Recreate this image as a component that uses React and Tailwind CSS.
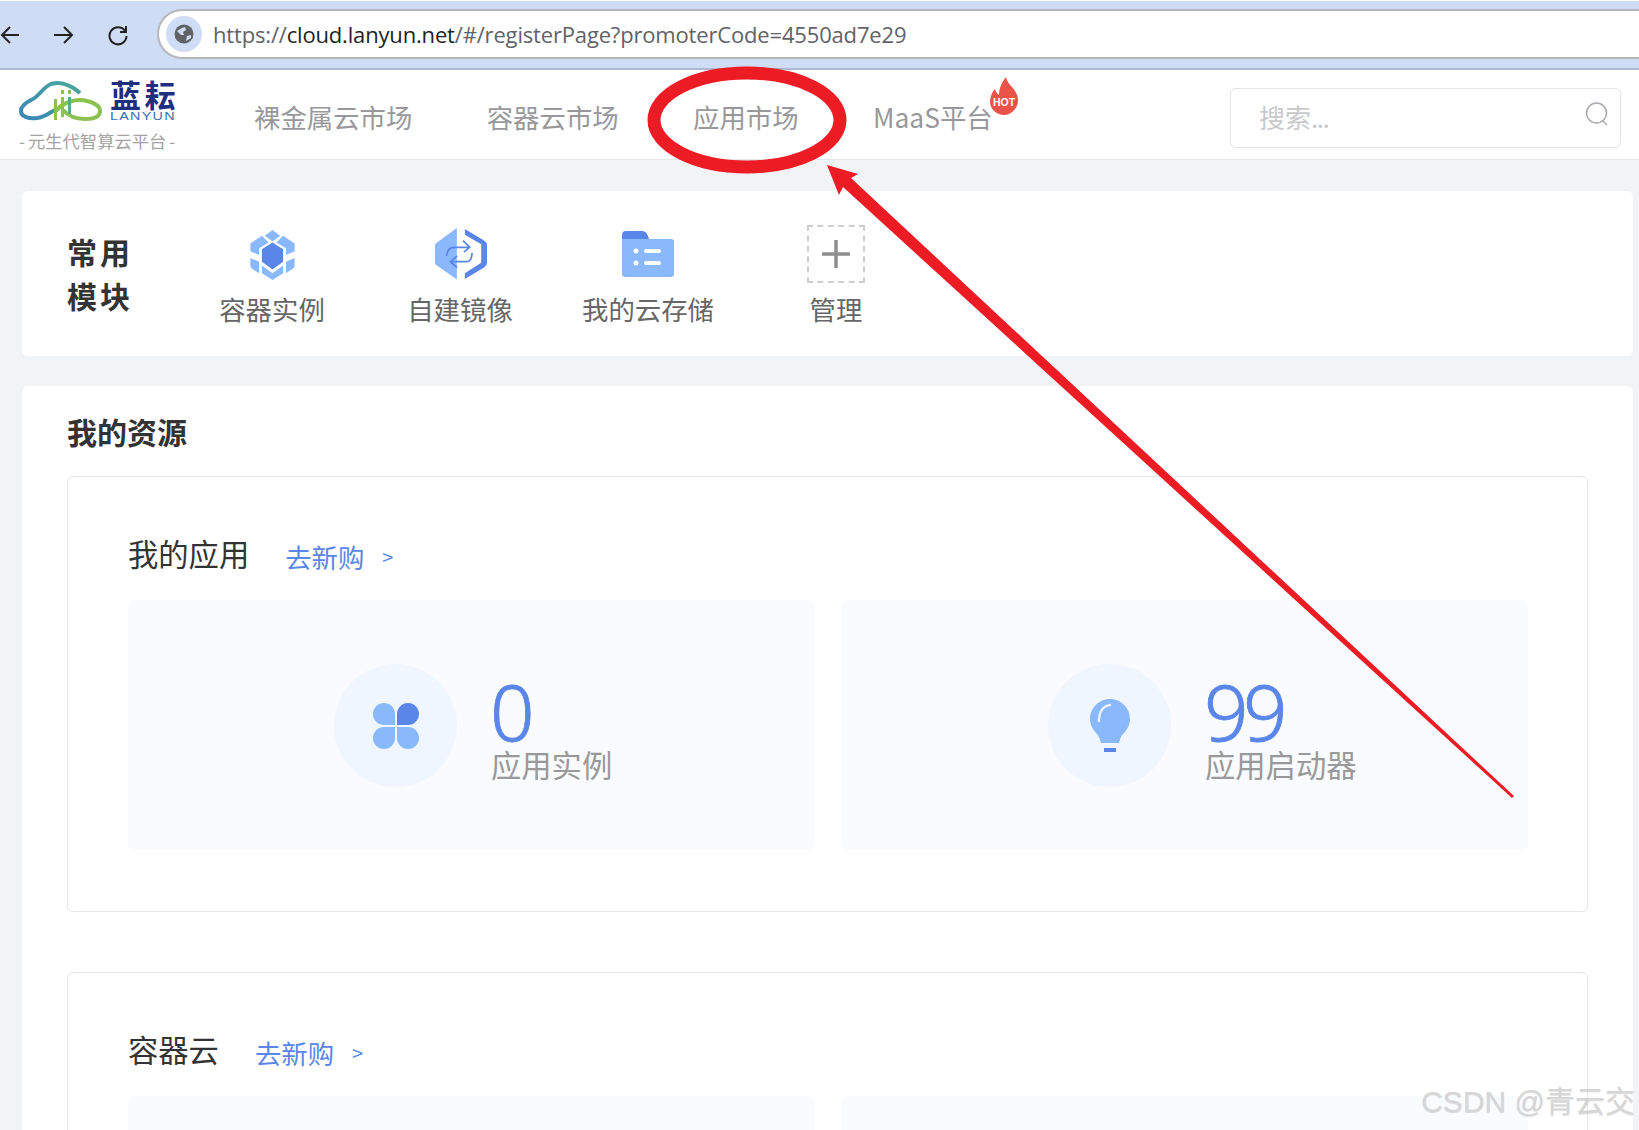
import React from "react";

const CJK = { fontFamily: '"Noto Sans CJK SC", "Noto Sans", sans-serif' };

function ContainerIcon() {
  return (
    <svg width="45" height="50" viewBox="0 0 46 52" className="mt-[2px] ml-[1px]">
      <path d="M23 13 L34 20 V33 L23 41 L12 33 V20 Z" fill="#5a86ea" />
      <path d="M15 6 L23 0 L31 6 L23 12 Z" fill="#8ab8fd" />
      <path d="M0 14 L12 6 L19 13 L9 19 V26 L0 22 Z" fill="#8ab8fd" />
      <path d="M46 14 L34 6 L27 13 L37 19 V26 L46 22 Z" fill="#8ab8fd" />
      <path d="M0 29 L9 33 V45 L1.500 40 Q0 39 0 37 Z" fill="#8ab8fd" />
      <path d="M46 29 L37 33 V45 L44.500 40 Q46 39 46 37 Z" fill="#8ab8fd" />
      <path d="M12 37 L23 45 L34 37 V45 L23 52 L12 45 Z" fill="#8ab8fd" />
    </svg>
  );
}

function ImageIcon() {
  return (
    <svg width="52" height="52" viewBox="0 0 54 54" className="ml-[1px]">
      <path d="M22.700 0 V53.500 L2 39 Q0 38 0 36 V18 Q0 16 2 15 Z" fill="#8ab8fd" />
      <path d="M31 1 L51 13 Q54 15 54 18 V36 Q54 39 51 41 L31 53 V47 L48 36 V17 L31 7 Z" fill="#5a86ea" />
      <path d="M12 29 Q13 20 20 20 H35 M29 13 L36 20 L30 25" fill="none" stroke="#5a86ea" strokeWidth="1.800" />
      <path d="M38.500 26 Q38 35 33 35 H16 M23 29 L16 35 L23 41" fill="none" stroke="#5a86ea" strokeWidth="1.800" />
    </svg>
  );
}

function FolderIcon() {
  return (
    <svg width="52" height="46" viewBox="0 0 52 46">
      <path d="M0 10 V4 Q0 0 4 0 H20 Q24 0 26 5 L27 8 H3 Z" fill="#5a86ea" />
      <path d="M0 8 H49 Q52 8 52 11 V43 Q52 46 49 46 H3 Q0 46 0 43 Z" fill="#8ab8fd" />
      <circle cx="14" cy="20" r="2.500" fill="#fff" />
      <circle cx="14" cy="32" r="2.500" fill="#fff" />
      <rect x="22" y="18" width="17" height="4" rx="2" fill="#fff" />
      <rect x="22" y="30" width="17" height="4" rx="2" fill="#fff" />
    </svg>
  );
}

function PetalIcon() {
  return (
    <svg width="46" height="46" viewBox="0 0 46 46">
      <path d="M11 0 A11 11 0 0 0 0 11 A11 11 0 0 0 11 22 H22 V11 A11 11 0 0 0 11 0 Z" fill="#8ab8fd" />
      <path d="M35 0 A11 11 0 0 1 46 11 A11 11 0 0 1 35 22 H24 V11 A11 11 0 0 1 35 0 Z" fill="#5a86ea" />
      <path d="M11 46 A11 11 0 0 1 0 35 A11 11 0 0 1 11 24 H22 V35 A11 11 0 0 1 11 46 Z" fill="#8ab8fd" />
      <path d="M35 46 A11 11 0 0 0 46 35 A11 11 0 0 0 35 24 H24 V35 A11 11 0 0 0 35 46 Z" fill="#8ab8fd" />
    </svg>
  );
}

function BulbIcon() {
  return (
    <svg width="42" height="54" viewBox="0 0 42 54">
      <path d="M21 0 C32 0 41 9 41 20 C41 26 38 31 34 35 C32 37 31 40 30 44 H12 C11 40 10 37 8 35 C4 31 1 26 1 20 C1 9 10 0 21 0 Z" fill="#8ab8fd" />
      <path d="M10 22 C10 13 14 7 21 6" fill="none" stroke="#eaf3ff" strokeWidth="2.500" strokeLinecap="round" />
      <rect x="15" y="49" width="12" height="4" fill="#5a86ea" />
    </svg>
  );
}

function Logo() {
  return (
    <div className="w-[160px] h-[78px] ml-[19px] mt-[8px] shrink-0 flex flex-col">
      <div className="flex items-start h-[50px]">
        <svg width="84" height="44" viewBox="0 0 84 44" className="mt-[2px]">
          <defs>
            <linearGradient id="cloud" x1="0" y1="1" x2="1" y2="0">
              <stop offset="0" stopColor="#3a86b8" />
              <stop offset="1" stopColor="#4aa79a" />
            </linearGradient>
          </defs>
          <path d="M61 13 C52 5 42 1 32 4 C24 7 20 17 12 20 C6 23 2 26 2 31 C2 37 10 39 18 38 C26 37 30 33 36 30" fill="none" stroke="url(#cloud)" strokeWidth="4" />
          <path d="M37 31 C44 22 58 18 68 21 C76 23 81 26 81 31 C81 37 74 39 66 39 C58 39 50 37 44 30" fill="none" stroke="#8cc152" strokeWidth="4" />
          <rect x="35" y="19" width="3" height="21" fill="#8cc152" />
          <rect x="42" y="17" width="3" height="20" fill="#8cc152" />
          <rect x="49" y="17" width="3" height="17" fill="#5aa98c" />
          <rect x="42" y="10" width="3" height="4" fill="#8cc152" />
          <rect x="49" y="10" width="3" height="4" fill="#8cc152" />
        </svg>
        <div className="ml-[7px] flex flex-col items-start mt-[-1px]">
          <div className="text-[31px] leading-[33px] font-bold text-[#1e2f80] tracking-[3.500px] whitespace-nowrap">蓝耘</div>
          <div className="mt-[1px] text-[11.500px] leading-[11px] text-[#3a6fb5] tracking-[1px] whitespace-nowrap origin-left scale-x-[1.25]" style={{ fontFamily: '"Liberation Sans", sans-serif' }}>LANYUN</div>
        </div>
      </div>
      <div className="flex items-center gap-[3px] text-[17.300px] leading-[22px] text-[#a3a3a3] mt-[2px] whitespace-nowrap">
        <span>-</span>
        <span>元生代智算云平台</span>
        <span>-</span>
      </div>
    </div>
  );
}

function Flame() {
  return (
    <svg width="30" height="38" viewBox="0 0 30 38" className="absolute left-[116px] top-[-24px]">
      <path d="M17 0 C18 6 23 9 26 14 C30 20 30 27 26 32 C23 36 19 38 15 38 C8 38 1 32 1 25 C1 20 3 15 6 12 C7 15 8 17 10 18 C10 11 13 5 17 0 Z" fill="#ec5348" />
      <text x="15" y="29" textAnchor="middle" fontSize="10.500" fontWeight="700" fill="#fff" style={{ fontFamily: '"Liberation Sans", sans-serif' }}>HOT</text>
    </svg>
  );
}

function Module({ icon, label }) {
  return (
    <div className="w-[188px] flex flex-col items-center">
      <div className="h-[56px] flex items-center justify-center">{icon}</div>
      <div className="mt-[8px] text-[26.400px] leading-[38px] text-[#666] whitespace-nowrap">{label}</div>
    </div>
  );
}

function Stat({ icon, value, label }) {
  return (
    <div className="flex-1 h-[250px] bg-[#fafbff] rounded-[6px] pl-[206px] pt-[64px] flex items-start">
      <div className="w-[123px] h-[123px] rounded-full bg-[#eff6ff] flex items-center justify-center shrink-0">{icon}</div>
      <div className="ml-[33px] mt-[13px]">
        <div className="text-[78px] leading-[68px] text-[#5a86ea] tracking-[-5.500px] font-light [-webkit-text-stroke:0.800px_#5a86ea]" style={{ fontFamily: '"Noto Sans", sans-serif' }}>{value}</div>
        <div className="text-[30.300px] leading-[36px] text-[#999] whitespace-nowrap mt-[1px] ml-[1px]">{label}</div>
      </div>
    </div>
  );
}

function BuyLink() {
  return (
    <div className="flex items-center text-[#5a86ea] mt-[6px]">
      <span className="text-[26.400px] leading-[36px]">去新购</span>
      <span className="text-[20px] leading-[36px] ml-[18px]">&gt;</span>
    </div>
  );
}

export default function App() {
  return (
    <div className="relative w-[1639px] h-[1130px] overflow-hidden bg-[#f2f3f5]" style={CJK}>
      {/* browser chrome */}
      <div className="h-[70px] bg-[#cfdcf5] border-t border-white border-b-2 border-b-[#aab8d2] flex items-center">
        <svg width="22" height="22" viewBox="0 0 22 22" fill="none" stroke="#222" strokeWidth="2">
          <path d="M19 11 H2 M10 3 L2 11 L10 19" />
        </svg>
        <svg width="22" height="22" viewBox="0 0 22 22" className="ml-[30px]" fill="none" stroke="#222" strokeWidth="2">
          <path d="M2 11 H19 M12 3 L20 11 L12 19" />
        </svg>
        <svg width="22" height="22" viewBox="0 0 22 22" className="ml-[33px]" fill="none" stroke="#222" strokeWidth="2">
          <path d="M18 7 A8.500 8.500 0 1 0 19.500 12" />
          <path d="M19 2 V8 H13" />
        </svg>
        <div className="ml-[28px] flex-1 h-[50px] mb-[2px] bg-white border-2 border-r-0 border-[#b4b6ba] rounded-l-[25px] flex items-center">
          <div className="ml-[7px] w-[36px] h-[36px] rounded-full bg-[#cfdcf5] flex items-center justify-center">
            <svg width="20" height="20" viewBox="0 0 20 20">
              <circle cx="10" cy="10" r="9.500" fill="#5f6368" />
              <path d="M3 7 L8 4 L11 3 L12 6 L9 8 L10 11 L7 11 Z M12 17 L13 12 L17 11 L17 14 Z" fill="#cfdcf5" />
            </svg>
          </div>
          <div className="ml-[11px] text-[22px] leading-[30px] whitespace-nowrap text-[#5f6368]" style={{ fontFamily: '"Open Sans", sans-serif', letterSpacing: "-0.170px" }}>
            https://<span className="text-[#1f1f1f]">cloud.lanyun.net</span>/#/registerPage?promoterCode=4550ad7e29
          </div>
        </div>
      </div>

      {/* site header */}
      <div className="h-[90px] bg-white border-b border-[#e6e6e8] flex items-start">
        <Logo />
        <nav className="flex items-center h-[32px] mt-[31px] ml-[75px] gap-[74.400px] text-[26.400px] leading-[32px] text-[#98989c] whitespace-nowrap">
          <span>裸金属云市场</span>
          <span>容器云市场</span>
          <span>应用市场</span>
          <span className="relative">MaaS平台<Flame /></span>
        </nav>
        <div className="ml-auto mr-[18px] mt-[18px] w-[391px] h-[60px] border border-[#e2e2e8] rounded-[6px] flex items-center pl-[28px] pr-[11px] justify-between">
          <span className="text-[26px] leading-[32px] text-[#c9c9cd] mt-[-2px]">搜索<span className="tracking-[-1.500px]">...</span></span>
          <svg width="24" height="24" viewBox="0 0 24 24" fill="none" stroke="#a9a9af" strokeWidth="1.500" className="mb-[9px]">
            <circle cx="11.500" cy="11" r="10" />
            <path d="M18 19 L22 23" />
          </svg>
        </div>
      </div>

      {/* common modules */}
      <div className="mt-[31px] ml-[22px] w-[1611px] h-[165px] bg-white rounded-[6px] flex">
        <div className="ml-[45px] mt-[38px] text-[30px] leading-[44px] font-bold text-[#333] tracking-[3px] w-[111px]">
          <div>常用</div>
          <div>模块</div>
        </div>
        <div className="flex mt-[35px]">
          <Module icon={<ContainerIcon />} label="容器实例" />
          <Module icon={<ImageIcon />} label="自建镜像" />
          <Module icon={<FolderIcon />} label="我的云存储" />
          <Module
            icon={
              <div className="w-[58px] h-[58px] border-2 border-dashed border-[#cdcdd2] flex items-center justify-center">
                <svg width="28" height="28" viewBox="0 0 28 28" stroke="#8e8e8e" strokeWidth="3.500"><path d="M14 0 V28 M0 14 H28" /></svg>
              </div>
            }
            label="管理"
          />
        </div>
      </div>

      {/* resources */}
      <div className="mt-[30px] ml-[22px] w-[1611px] h-[800px] bg-white rounded-[6px] pl-[45px] pt-[26px]">
        <div className="text-[30px] leading-[38px] font-bold text-[#333]">我的资源</div>
        <div className="mt-[26px] w-[1521px] h-[436px] border border-[#e5e6eb] rounded-[6px] pl-[60px] pr-[59px] pt-[56px]">
          <div className="flex items-start h-[67px] gap-[36px]">
            <span className="text-[30.300px] leading-[40px] text-[#333]">我的应用</span>
            <BuyLink />
          </div>
          <div className="flex gap-[28px]">
            <Stat icon={<PetalIcon />} value="0" label="应用实例" />
            <Stat icon={<BulbIcon />} value="99" label="应用启动器" />
          </div>
        </div>
        <div className="mt-[60px] w-[1521px] h-[300px] border border-[#e5e6eb] rounded-[6px] pl-[60px] pr-[59px] pt-[56px]">
          <div className="flex items-start h-[67px] gap-[36px]">
            <span className="text-[30.300px] leading-[40px] text-[#333]">容器云</span>
            <BuyLink />
          </div>
          <div className="flex gap-[28px]">
            <div className="flex-1 h-[200px] bg-[#fafbff] rounded-[6px]" />
            <div className="flex-1 h-[200px] bg-[#fafbff] rounded-[6px]" />
          </div>
        </div>
      </div>

      {/* annotation */}
      <svg className="absolute left-0 top-0 pointer-events-none" width="1639" height="1130">
        <ellipse cx="747" cy="120" rx="93" ry="47" fill="none" stroke="#ed1c24" strokeWidth="13" />
        <path d="M827 165 L858 174 L851 178 L1514 796 L1512 798 L843 187 L839 195 Z" fill="#ed1c24" />
      </svg>

      {/* watermark */}
      <div className="absolute right-[4px] top-[1082px] text-[30px] leading-[40px] text-[#d6d6d6] whitespace-nowrap [text-shadow:0_1px_1px_#0002]" style={{ fontFamily: '"Liberation Sans", "Noto Sans CJK SC", sans-serif' }}>
        CSDN @青云交
      </div>
    </div>
  );
}
